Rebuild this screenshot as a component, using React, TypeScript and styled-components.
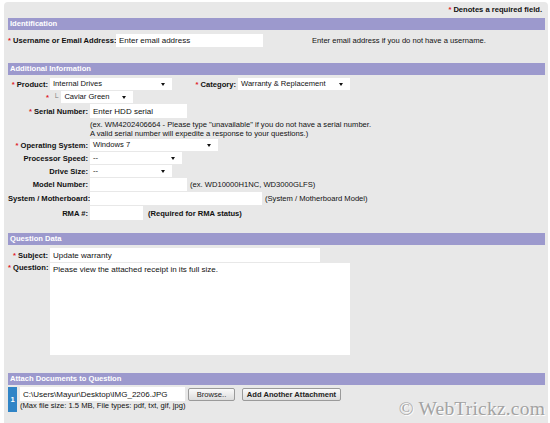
import React from 'react'
import { styled, createGlobalStyle } from 'styled-components'

const GlobalStyle = createGlobalStyle`
    html, body {
        margin: 0;
        padding: 0;
        background: #ffffff;
        font-family: "Liberation Sans", Arial, sans-serif;
        font-size: 7.6px;
        color: #111;
    }
`

const Page = styled.div`
    position: relative;
    width: 550px;
    height: 423px;
    overflow: hidden;
    background: #fff;
`

const Panel = styled.div`
    margin: 2px 2px 0 4px;
    height: 421px;
    padding: 3px 3px 0 4px;
    box-sizing: border-box;
    background: #e8e8e8;
    border-radius: 4px 4px 0 0;
`

const RequiredNote = styled.div`
    text-align: right;
    font-weight: bold;
    line-height: 10px;
    padding-right: 3px;
`

const Star = styled.span`
    color: #e0202a;
    font-weight: bold;
    margin-right: 2px;
`

const SectionHeader = styled.div<{ $top: number }>`
    margin-top: ${p => p.$top}px;
    height: 12px;
    line-height: 12px;
    background: #9c99cd;
    color: #fff;
    font-weight: bold;
    padding-left: 2px;
`

const Row = styled.div<{ $top?: number; $align?: string }>`
    display: flex;
    align-items: ${p => p.$align ?? 'center'};
    margin-top: ${p => p.$top ?? 0}px;
`

const Label = styled.label<{ $w: number }>`
    width: ${p => p.$w}px;
    flex: none;
    text-align: right;
    font-weight: bold;
    padding-right: 2px;
    box-sizing: border-box;
    white-space: nowrap;
`

const Field = styled.input<{ $w: number; $h?: number }>`
    width: ${p => p.$w}px;
    height: ${p => p.$h ?? 13}px;
    box-sizing: border-box;
    border: none;
    background: #fff;
    padding: 0 3px;
    margin: 0;
    font-family: "Liberation Sans", Arial, sans-serif;
    font-size: 8px;
    color: #111;
    outline: none;
`

const Area = styled.textarea`
    width: 300px;
    height: 92px;
    box-sizing: border-box;
    border: none;
    background: #fff;
    padding: 2px 3px;
    margin: 0;
    resize: none;
    font-family: "Liberation Sans", Arial, sans-serif;
    font-size: 8px;
    color: #111;
    outline: none;
`

const SelectBox = styled.div<{ $w: number }>`
    position: relative;
    width: ${p => p.$w}px;
    height: 12px;
    line-height: 12px;
    background: #fff;
    padding-left: 3px;
    box-sizing: border-box;
    flex: none;
    &::after {
        content: '';
        position: absolute;
        right: 7px;
        top: 5px;
        border-left: 2.5px solid transparent;
        border-right: 2.5px solid transparent;
        border-top: 3px solid #111;
    }
`

const Help = styled.span<{ $left: number; $bold?: boolean }>`
    margin-left: ${p => p.$left}px;
    font-weight: ${p => (p.$bold ? 'bold' : 'normal')};
    white-space: nowrap;
`

const HelpBlock = styled.div`
    margin: 2px 0 1px 82px;
    line-height: 9px;
`

const Corner = styled.span`
    color: #777;
    margin: 0 3px 0 0;
`

const AttachRow = styled.div`
    display: flex;
    margin-top: 2px;
    gap: 3px;
`

const Badge = styled.div`
    width: 9px;
    height: 25px;
    background: #2f84c6;
    color: #fff;
    font-weight: bold;
    display: flex;
    align-items: center;
    justify-content: center;
    flex: none;
`

const AttachBody = styled.div`
    display: flex;
    flex-direction: column;
`

const Button = styled.button<{ $w: number; $gap: number; $bold?: boolean }>`
    width: ${p => p.$w}px;
    height: 13px;
    margin: 0 0 0 ${p => p.$gap}px;
    padding: 0;
    border: 1px solid #9a9a9a;
    border-radius: 2px;
    background: linear-gradient(#fafafa, #dcdcdc);
    font-family: "Liberation Sans", Arial, sans-serif;
    font-size: 7.6px;
    font-weight: ${p => (p.$bold ? 'bold' : 'normal')};
    color: #222;
    line-height: 11px;
`

const Watermark = styled.div`
    position: absolute;
    right: 5px;
    bottom: 3px;
    font-family: "Liberation Serif", "Times New Roman", serif;
    font-size: 19.5px;
    color: #a3a3a3;
    text-shadow: 1px 1px 0 #fff;
    letter-spacing: 0.2px;
`

const App: React.FC = () => {
    return (<>
        <GlobalStyle />
        <Page>
            <Panel>
                <RequiredNote><Star>*</Star>Denotes a required field.</RequiredNote>

                <SectionHeader $top={3}>Identification</SectionHeader>
                <Row $top={4}>
                    <Label $w={108}><Star>*</Star>Username or Email Address:</Label>
                    <Field $w={147} defaultValue="Enter email address" />
                    <Help $left={49}>Enter email address if you do not have a username.</Help>
                </Row>

                <SectionHeader $top={16}>Additional Information</SectionHeader>
                <Row $top={3}>
                    <Label $w={42}><Star>*</Star>Product:</Label>
                    <SelectBox $w={122}>Internal Drives</SelectBox>
                    <Label $w={66}><Star>*</Star>Category:</Label>
                    <SelectBox $w={112}>Warranty &amp; Replacement</SelectBox>
                </Row>
                <Row $top={1}>
                    <Label $w={45}><Star>*</Star></Label>
                    <Corner>└</Corner>
                    <SelectBox $w={72}>Caviar Green</SelectBox>
                </Row>
                <Row $top={1}>
                    <Label $w={82}><Star>*</Star>Serial Number:</Label>
                    <Field $w={97} $h={14} defaultValue="Enter HDD serial" />
                </Row>
                <HelpBlock>
                    (ex. WM4202406664 - Please type "unavailable" if you do not have a serial number.<br />
                    A valid serial number will expedite a response to your questions.)
                </HelpBlock>
                <Row>
                    <Label $w={82}><Star>*</Star>Operating System:</Label>
                    <SelectBox $w={128}>Windows 7</SelectBox>
                </Row>
                <Row $top={1}>
                    <Label $w={82}>Processor Speed:</Label>
                    <SelectBox $w={92}>--</SelectBox>
                </Row>
                <Row $top={1}>
                    <Label $w={82}>Drive Size:</Label>
                    <SelectBox $w={82}>--</SelectBox>
                </Row>
                <Row $top={1}>
                    <Label $w={82}>Model Number:</Label>
                    <Field $w={97} />
                    <Help $left={3}>(ex. WD10000H1NC, WD3000GLFS)</Help>
                </Row>
                <Row $top={1}>
                    <Label $w={82}>System / Motherboard:</Label>
                    <Field $w={172} />
                    <Help $left={3}>(System / Motherboard Model)</Help>
                </Row>
                <Row $top={1}>
                    <Label $w={82}>RMA #:</Label>
                    <Field $w={53} $h={14} />
                    <Help $left={5} $bold>(Required for RMA status)</Help>
                </Row>

                <SectionHeader $top={13}>Question Data</SectionHeader>
                <Row $top={3}>
                    <Label $w={42}><Star>*</Star>Subject:</Label>
                    <Field $w={270} $h={14} defaultValue="Update warranty" />
                </Row>
                <Row $top={1} $align="flex-start">
                    <Label $w={42}><Star>*</Star>Question:</Label>
                    <Area defaultValue="Please view the attached receipt in its full size." />
                </Row>

                <SectionHeader $top={18}>Attach Documents to Question</SectionHeader>
                <AttachRow>
                    <Badge>1</Badge>
                    <AttachBody>
                        <Row>
                            <Field $w={165} $h={14} defaultValue="C:\Users\Mayur\Desktop\IMG_2206.JPG" />
                            <Button $w={47} $gap={3}>Browse..</Button>
                            <Button $w={99} $gap={7} $bold>Add Another Attachment</Button>
                        </Row>
                        <Help $left={0}>(Max file size: 1.5 MB, File types: pdf, txt, gif, jpg)</Help>
                    </AttachBody>
                </AttachRow>
            </Panel>
            <Watermark>© WebTrickz.com</Watermark>
        </Page>
    </>
    )
}

export default App
